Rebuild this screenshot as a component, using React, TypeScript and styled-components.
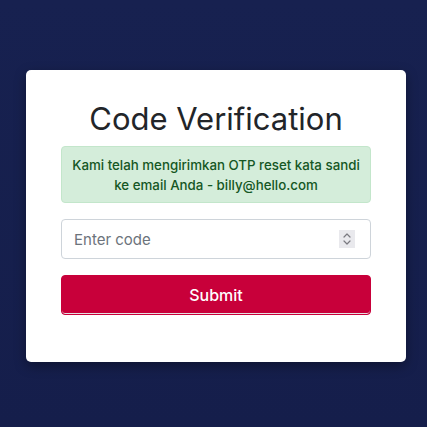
import React from "react";
import styled, { createGlobalStyle } from "styled-components";

const Global = createGlobalStyle`
  html, body { margin: 0; padding: 0; }
  body {
    background: #172150;
    font-family: Inter, "Open Sans", "Liberation Sans", sans-serif;
    min-height: 427px;
  }
  * { box-sizing: border-box; }
`;

const Page = styled.div`
  min-height: 427px;
  padding: 70px 0 0 26px;
  background: linear-gradient(#172150, #151e4b);
`;

const Card = styled.div`
  width: 380px;
  height: 292px;
  background: #fff;
  border-radius: 5px;
  box-shadow: 0 4px 12px rgba(0, 0, 0, 0.35);
  padding: 30px 35px 0;
  display: flex;
  flex-direction: column;
`;

const Title = styled.h1`
  margin: 0;
  font-size: 31px;
  line-height: 38px;
  font-weight: 400;
  color: #222529;
  text-align: center;
`;

const Alert = styled.div`
  margin-top: 8px;
  height: 57px;
  background: #d4edda;
  border: 1px solid #c3e6cb;
  border-radius: 4px;
  color: #155724;
  font-size: 13.3px;
  line-height: 20px;
  font-weight: 500;
  text-align: center;
  padding: 7.5px 8px;
`;

const InputBox = styled.div`
  margin-top: 16px;
  height: 40px;
  border: 1px solid #ced4da;
  border-radius: 4px;
  display: flex;
  align-items: center;
  padding: 0 15px 0 12px;
`;

const Input = styled.input`
  flex: 1;
  border: none;
  outline: none;
  font: inherit;
  font-size: 15px;
  color: #495057;
  background: transparent;
  padding: 0;
  &::placeholder { color: #6c737b; }
`;

const Spinner = styled.div`
  width: 16px;
  height: 18px;
  background: #e9e9ed;
  display: flex;
  align-items: center;
  justify-content: center;
`;

const Button = styled.button`
  margin-top: 16px;
  height: 40px;
  background: #c8003a;
  border: 1px solid #c8003a;
  border-radius: 4px;
  box-shadow: inset 0 -1px 0 #e4dfe1;
  color: #fff;
  font: inherit;
  font-size: 16px;
  font-weight: 500;
  cursor: pointer;
`;

export default function App() {
  return (
    <>
      <Global />
      <Page>
        <Card>
          <Title>Code Verification</Title>
          <Alert>
            Kami telah mengirimkan OTP reset kata sandi
            <br />
            ke email Anda - billy@hello.com
          </Alert>
          <InputBox>
            <Input type="text" placeholder="Enter code" />
            <Spinner>
              <svg width="10" height="14" viewBox="0 0 10 14" fill="none" stroke="#7a7a80" strokeWidth="1.2" strokeLinecap="round" strokeLinejoin="round">
                <path d="M2 5 L5 2 L8 5" />
                <path d="M2 9 L5 12 L8 9" />
              </svg>
            </Spinner>
          </InputBox>
          <Button>Submit</Button>
        </Card>
      </Page>
    </>
  );
}
